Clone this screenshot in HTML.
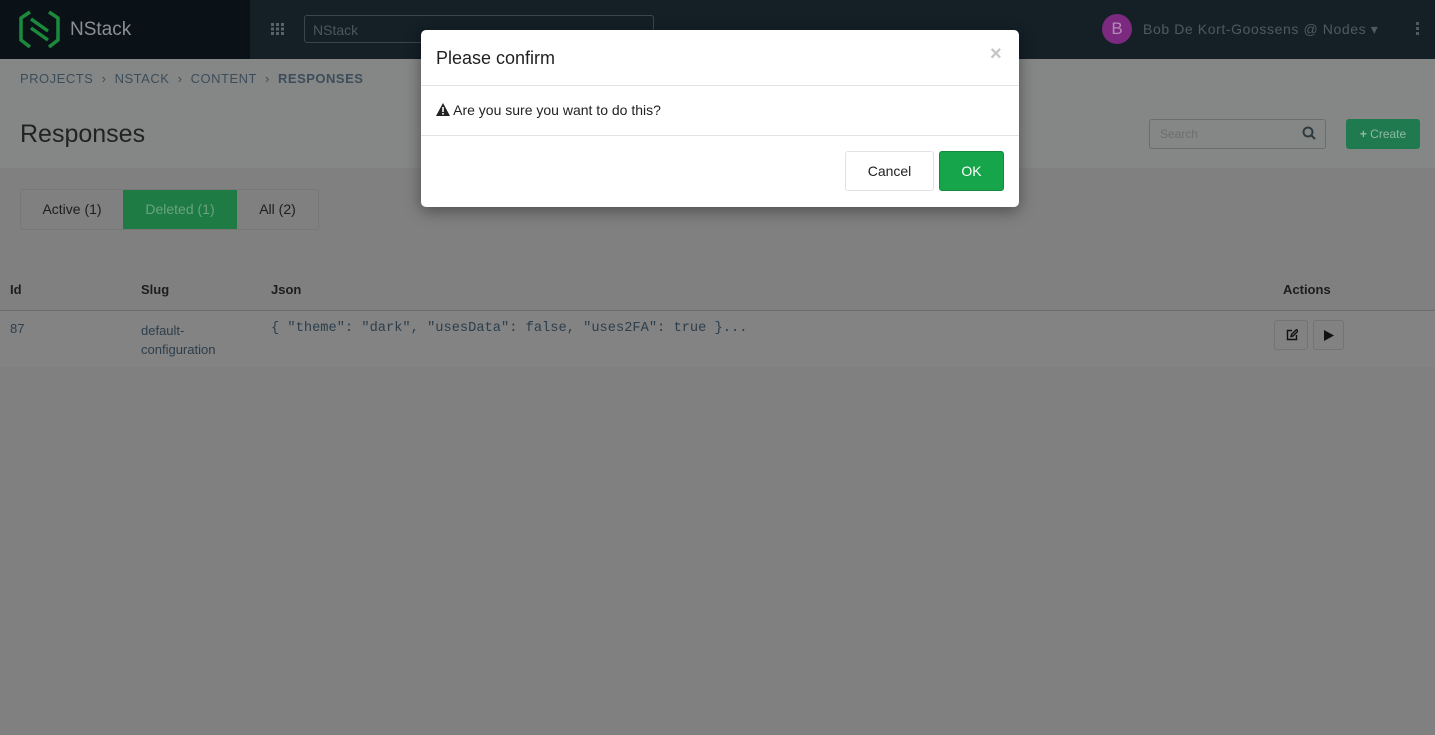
<!DOCTYPE html>
<html><head><meta charset="utf-8"><style>
*{box-sizing:border-box;margin:0;padding:0}
body{width:1435px;height:735px;overflow:hidden;background:#808080;font-family:"Liberation Sans",sans-serif;position:relative}
.top{position:absolute;left:0;top:0;width:1435px;height:59px;background:#141f26}
.logo{position:absolute;left:0;top:0;width:250px;height:59px;background:#0a1117}
.hdr{position:absolute;left:0;top:59px;width:1435px;height:109px;background:#858787}
.t{position:absolute;white-space:nowrap}
.tabs{position:absolute;left:20px;top:189px;height:41px;border:1px solid #777;border-radius:3px;display:flex;font-size:14px;color:#1d1d1d}
.tabs div{text-align:center;line-height:39px}
.row{position:absolute;left:0;top:310px;width:1435px;height:57px;background:#838383;border-top:1px solid #6c6c6c}
.btn{position:absolute;width:34px;height:30px;border:1px solid #747474;border-radius:3px;background:#828282}
.modal{position:absolute;left:421px;top:30px;width:598px;height:177px;background:#fff;border-radius:5px;box-shadow:0 4px 16px rgba(0,0,0,.4)}
</style></head><body>
<div class="top"></div>
<div class="logo">
<svg style="position:absolute;left:19px;top:10px" width="41" height="39" viewBox="0 0 41 39" fill="none" stroke="#1c8a3c" stroke-width="3.5"><path d="M11 2L2 8v22l9 7M30 2l9 6v22l-9 7M12 9l17 12M12 18l17 12"/></svg>
<div class="t" style="left:70px;top:19px;font-size:19px;color:#8a8f93">NStack</div>
</div>
<svg style="position:absolute;left:271px;top:23px" width="13" height="12" fill="#5a6369"><rect x="0" y="0" width="3" height="3"/><rect x="5" y="0" width="3" height="3"/><rect x="10" y="0" width="3" height="3"/><rect x="0" y="4.5" width="3" height="3"/><rect x="5" y="4.5" width="3" height="3"/><rect x="10" y="4.5" width="3" height="3"/><rect x="0" y="9" width="3" height="3"/><rect x="5" y="9" width="3" height="3"/><rect x="10" y="9" width="3" height="3"/></svg>
<div style="position:absolute;left:304px;top:15px;width:350px;height:28px;border:1px solid #3a464d;border-radius:3px"></div>
<div class="t" style="left:313px;top:22px;font-size:14px;color:#4c565c">NStack</div>
<div style="position:absolute;left:1102px;top:14px;width:30px;height:30px;border-radius:50%;background:#7b2a80;color:#b48bb8;font-size:17px;text-align:center;line-height:30px">B</div>
<div class="t" style="left:1143px;top:21px;font-size:14px;letter-spacing:0.6px;color:#4e5a61">Bob De Kort-Goossens @ Nodes ▾</div>
<div class="t" style="left:1416px;top:22px;line-height:0"><svg width="4" height="14" fill="#4e5a61"><rect x="0" y="0" width="3" height="3"/><rect x="0" y="5" width="3" height="3"/><rect x="0" y="10" width="3" height="3"/></svg></div>
<div class="hdr"></div>
<div class="t" style="left:20px;top:71px;font-size:13px;letter-spacing:0.5px;color:#3c4d59">PROJECTS &nbsp;›&nbsp; NSTACK &nbsp;›&nbsp; CONTENT &nbsp;›&nbsp; <b>RESPONSES</b></div>
<div class="t" style="left:20px;top:120px;font-size:25px;color:#222">Responses</div>
<div style="position:absolute;left:1149px;top:119px;width:177px;height:30px;border:1px solid #6a6d6e;border-radius:3px"></div>
<div class="t" style="left:1160px;top:127px;font-size:12px;color:#6b6e6f">Search</div>
<svg style="position:absolute;left:1302px;top:126px" width="14" height="14" fill="none" stroke="#2e3a40" stroke-width="2"><circle cx="6" cy="6" r="4.5"/><path d="M9.5 9.5L13 13"/></svg>
<div style="position:absolute;left:1346px;top:119px;width:74px;height:30px;background:#1f7a4f;border-radius:3px;color:#8fb9a3;font-size:12px;text-align:center;line-height:30px"><b>+</b> Create</div>
<div class="tabs"><div style="width:102px">Active (1)</div><div style="width:114px;background:#1e7b43;color:#6aa37e">Deleted (1)</div><div style="width:81px">All (2)</div></div>
<div class="t" style="left:10px;top:282px;font-size:13px;font-weight:bold;color:#1d1d1d">Id</div>
<div class="t" style="left:141px;top:282px;font-size:13px;font-weight:bold;color:#1d1d1d">Slug</div>
<div class="t" style="left:271px;top:282px;font-size:13px;font-weight:bold;color:#1d1d1d">Json</div>
<div class="t" style="left:1283px;top:282px;font-size:13px;font-weight:bold;color:#1d1d1d">Actions</div>
<div class="row"></div>
<div class="t" style="left:10px;top:321px;font-size:13px;color:#2c3e4c">87</div>
<div class="t" style="left:141px;top:321px;font-size:13px;color:#2c3e4c;line-height:19px">default-<br>configuration</div>
<div class="t" style="left:271px;top:321px;font-size:13.7px;color:#2c3e4c;font-family:'Liberation Mono',monospace">{ "theme": "dark", "usesData": false, "uses2FA": true }...</div>
<div class="btn" style="left:1274px;top:320px"><svg style="position:absolute;left:11px;top:8px" width="12" height="12" fill="none" stroke="#111" stroke-width="1.4"><path d="M6 1.5H1.5v9h9V6"/><path d="M5 7.5l.5-2 5-5 1.5 1.5-5 5z"/></svg></div>
<div class="btn" style="left:1313px;top:320px;width:31px"><svg style="position:absolute;left:10px;top:9px" width="10" height="11"><path d="M0 0l10 5.5L0 11z" fill="#111"/></svg></div>
<div class="modal">
<div class="t" style="left:15px;top:18px;font-size:18px;color:#222">Please confirm</div>
<div class="t" style="left:569px;top:13px;font-size:20px;color:#c5c5c5;font-weight:bold">×</div>
<div style="position:absolute;left:0;top:55px;width:100%;border-top:1px solid #e3e3e3"></div>
<div class="t" style="left:15px;top:72px;font-size:14px;color:#222"><svg width="14" height="13" style="vertical-align:-1px"><path d="M7 0L14 13H0z" fill="#222"/><rect x="6.2" y="4" width="1.6" height="5" fill="#fff"/><rect x="6.2" y="10" width="1.6" height="1.6" fill="#fff"/></svg> Are you sure you want to do this?</div>
<div style="position:absolute;left:0;top:105px;width:100%;border-top:1px solid #e3e3e3"></div>
<div style="position:absolute;left:424px;top:121px;width:89px;height:40px;border:1px solid #e2e2e2;border-radius:3px;font-size:14px;color:#222;text-align:center;line-height:38px">Cancel</div>
<div style="position:absolute;left:518px;top:121px;width:65px;height:40px;background:#16a54a;border:1px solid #138a3d;border-radius:3px;font-size:14px;color:#fff;text-align:center;line-height:38px">OK</div>
</div>
</body></html>
